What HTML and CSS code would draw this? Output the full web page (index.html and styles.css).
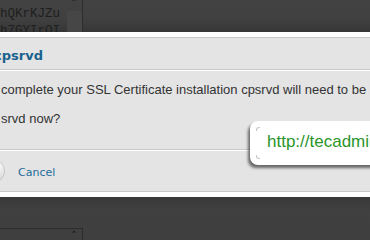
FILE: index.html
```html
<!DOCTYPE html>
<html lang="en">
  <head>
    <meta charset="UTF-8" />
    <title>Restart cpsrvd</title>
    <link rel="stylesheet" href="styles.css">
  </head>
  <body>
    <!-- textarea behind the overlay -->
    <div class="backdrop backdrop-top">
      <div class="key-box">
        <div class="key-text">
          <div>hQKrKJZu</div>
          <div>h7GYIrOI</div>
        </div>
        <div class="scrollbar">
          <span class="arrow">&#x2C4;</span>
          <div class="thumb"></div>
        </div>
      </div>
    </div>

    <section class="dialog">
      <div class="dialog-header">
        <h2>cpsrvd</h2>
      </div>
      <div class="dialog-body">
        <p>complete your SSL Certificate installation cpsrvd will need to be</p>
        <p>srvd now?</p>
      </div>
      <div class="dialog-footer">
        <button class="round-btn"></button>
        <a href="#" class="cancel-link">Cancel</a>
      </div>
    </section>

    <div class="backdrop backdrop-bottom">
      <div class="key-box key-box-low">
        <div class="key-text"></div>
        <div class="scrollbar">
          <span class="arrow">&#x2C4;</span>
        </div>
      </div>
    </div>

    <!-- url tooltip -->
    <div class="url-tip">http://tecadmin.net</div>
  </body>
</html>
```

FILE: styles.css
```css
* {
  margin: 0;
  padding: 0;
  box-sizing: border-box;
}

html,
body {
  height: 100%;
}

body {
  background: #3f3f3f;
  overflow: hidden;
  font-family: "Liberation Sans", Arial, sans-serif;
  position: relative;
}

.backdrop {
  background: #404040;
}

.backdrop-top {
  height: 32px;
  background: linear-gradient(#424242 0%, #404040 60%, #363636 100%);
  overflow: hidden;
}

.backdrop-bottom {
  height: 44px;
  padding-top: 31px;
  background: linear-gradient(#383838 0%, #404040 30%, #3f3f3f 100%);
}

.key-box {
  width: 83px;
  height: 32px;
  display: flex;
  border-right: 1px solid #2c2c2c;
}

.key-box-low {
  height: 20px;
  border-top: 1px solid #2c2c2c;
}

.key-text {
  flex: 1;
  font-family: "Liberation Mono", "Courier New", monospace;
  font-size: 12.5px;
  line-height: 17px;
  color: #1e1e1e;
  padding-top: 6px;
  overflow: hidden;
}

.scrollbar {
  width: 16px;
  display: flex;
  flex-direction: column;
  align-items: center;
}

.arrow {
  font-size: 11px;
  line-height: 8px;
  height: 11px;
  color: #1a1a1a;
  font-weight: bold;
  font-family: "DejaVu Sans", sans-serif;
}

.key-box-low .arrow {
  margin-top: 3px;
}

.thumb {
  width: 15px;
  flex: 1;
  background: #464646;
}

/* dialog */
.dialog {
  width: 400px;
  margin-left: -6px;
  background: #e4e4e4;
  border-top: 5px solid #fff;
  border-bottom: 5px solid #fff;
}

.dialog-header {
  height: 33px;
  border-top: 1px solid #c8c8c8;
  border-bottom: 1px solid #c8c8c8;
  box-shadow: 0 1px 0 #fff;
  padding-top: 10px;
}

.dialog-header h2 {
  font-family: "DejaVu Sans", Tahoma, sans-serif;
  font-size: 13px;
  font-weight: bold;
  color: #1a628e;
}

.dialog-body {
  height: 80px;
  padding: 12px 0 0 7px;
  border-bottom: 1px solid #c8c8c8;
  box-shadow: 0 1px 0 #fff;
  color: #333;
  font-size: 13px;
  white-space: nowrap;
}

.dialog-body p {
  line-height: 16px;
  margin-bottom: 13px;
}

.dialog-footer {
  height: 41px;
  margin-top: 1px;
  border-bottom: 1px solid #c8c8c8;
  display: flex;
  align-items: center;
  gap: 13px;
}

.round-btn {
  width: 24px;
  height: 24px;
  margin-left: -13px;
  border-radius: 50%;
  border: 1px solid #c4c4c4;
  background: linear-gradient(#fdfdfd, #d6d6d6);
}

.cancel-link {
  font-family: "DejaVu Sans", Tahoma, sans-serif;
  font-size: 11px;
  color: #1f6c9c;
  text-decoration: none;
  margin-top: 2px;
}

/* tooltip over the dialog */
.url-tip {
  position: absolute;
  left: 250px;
  top: 121px;
  width: 160px;
  height: 44px;
  padding: 11px 0 0 17px;
  background: #fff;
  border-radius: 8px;
  box-shadow: -2px 3px 3px rgba(0, 0, 0, 0.55);
  color: #2a952a;
  font-size: 17px;
  white-space: nowrap;
}

.url-tip::before,
.url-tip::after {
  content: "";
  position: absolute;
  left: 6px;
  width: 3px;
  height: 3px;
  border-left: 1px solid #c8c8c8;
}

.url-tip::before {
  top: 6px;
  border-top: 1px solid #c8c8c8;
  border-top-left-radius: 3px;
}

.url-tip::after {
  bottom: 6px;
  border-bottom: 1px solid #c8c8c8;
  border-bottom-left-radius: 3px;
}
```
